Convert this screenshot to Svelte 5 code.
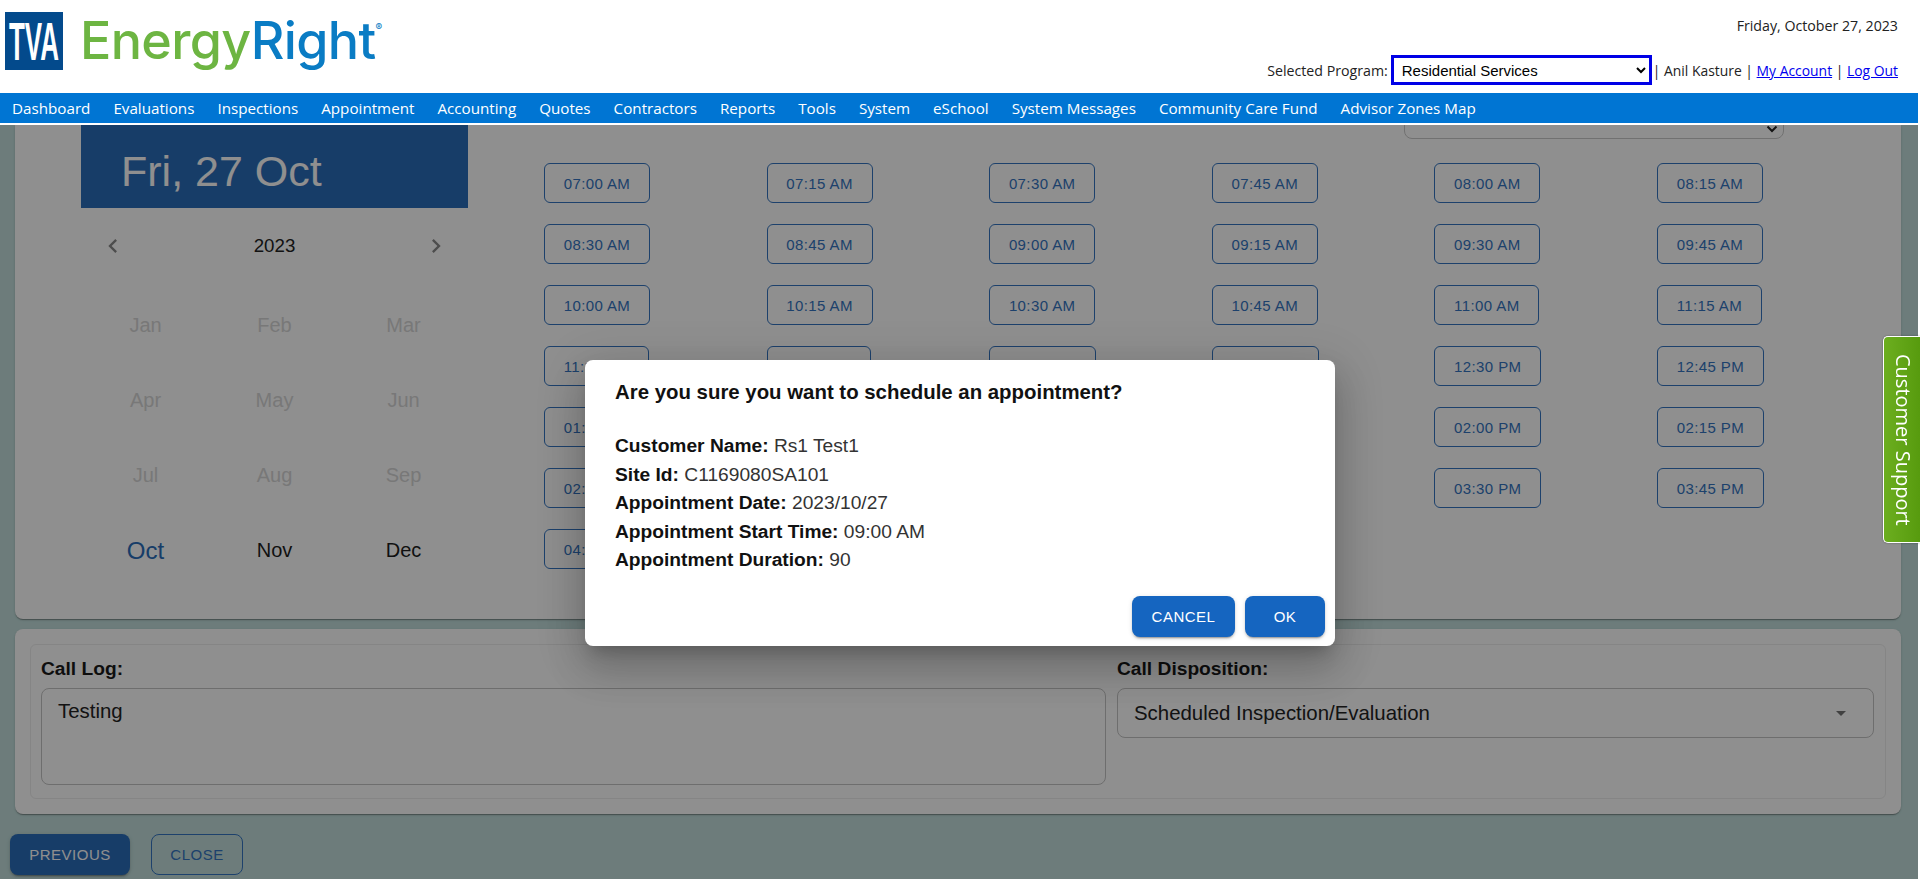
<script>
	const navItems = ['Dashboard', 'Evaluations', 'Inspections', 'Appointment', 'Accounting', 'Quotes', 'Contractors', 'Reports', 'Tools', 'System', 'eSchool', 'System Messages', 'Community Care Fund', 'Advisor Zones Map'];
	const months = ['Jan', 'Feb', 'Mar', 'Apr', 'May', 'Jun', 'Jul', 'Aug', 'Sep', 'Oct', 'Nov', 'Dec'];
	const slots = [
		'07:00 AM', '07:15 AM', '07:30 AM', '07:45 AM', '08:00 AM', '08:15 AM',
		'08:30 AM', '08:45 AM', '09:00 AM', '09:15 AM', '09:30 AM', '09:45 AM',
		'10:00 AM', '10:15 AM', '10:30 AM', '10:45 AM', '11:00 AM', '11:15 AM',
		'11:30 AM', '11:45 AM', '12:00 PM', '12:15 PM', '12:30 PM', '12:45 PM',
		'01:00 PM', '01:15 PM', '01:30 PM', '01:45 PM', '02:00 PM', '02:15 PM',
		'02:30 PM', '02:45 PM', '03:00 PM', '03:15 PM', '03:30 PM', '03:45 PM',
		'04:00 PM', '04:15 PM', '04:30 PM', '04:45 PM'
	];
	const details = [
		['Customer Name:', 'Rs1 Test1'],
		['Site Id:', 'C1169080SA101'],
		['Appointment Date:', '2023/10/27'],
		['Appointment Start Time:', '09:00 AM'],
		['Appointment Duration:', '90']
	];

	function monthClass(index) {
		if (index === 9) return 'month current';
		if (index > 9) return 'month';
		return 'month disabled';
	}
</script>

<header class="top">
	<div class="logo">
		<svg class="tva" width="58" height="58" viewBox="0 0 58 58">
			<rect width="58" height="58" fill="#034a8c" />
			<text x="29" y="48" text-anchor="middle" textLength="50" lengthAdjust="spacingAndGlyphs">TVA</text>
		</svg>
		<div class="brand"><span class="energy">Energy</span><span class="right">Right</span><sup>®</sup></div>
	</div>
	<div class="user">
		<div class="today">Friday, October 27, 2023</div>
		<div class="program">
			<span class="program-label">Selected Program:</span>
			<select class="program-select">
				<option>Residential Services</option>
			</select>
			<span class="account">| Anil Kasture | <a href="#account">My Account</a> | <a href="#logout">Log Out</a></span>
		</div>
	</div>
</header>

<nav class="menu">
	{#each navItems as item}
		<span>{item}</span>
	{/each}
</nav>

<main class="content">
	<section class="card schedule">
		<div class="calendar">
			<div class="date-head">Fri, 27 Oct</div>
			<div class="year-row">
				<svg width="28" height="28" viewBox="0 0 24 24"><path d="M15.41 7.41 14 6l-6 6 6 6 1.41-1.41L10.83 12z" /></svg>
				<span>2023</span>
				<svg width="28" height="28" viewBox="0 0 24 24"><path d="M10 6 8.59 7.41 13.17 12l-4.58 4.59L10 18l6-6z" /></svg>
			</div>
			<div class="months">
				{#each months as month, i}
					<div class={monthClass(i)}>{month}</div>
				{/each}
			</div>
		</div>
		<div class="times">
			<div class="duration">
				<svg width="12" height="8" viewBox="0 0 12 8"><path d="M1.5 1.5 6 6l4.5-4.5" /></svg>
			</div>
			<div class="slots">
				{#each slots as slot}
					<div class="slot-cell"><button class="slot">{slot}</button></div>
				{/each}
			</div>
		</div>
	</section>

	<section class="card log">
		<div class="log-inner">
			<div class="log-field">
				<div class="field-label">Call Log:</div>
				<div class="log-text">Testing</div>
			</div>
			<div class="disposition-field">
				<div class="field-label">Call Disposition:</div>
				<div class="disposition">
					<span>Scheduled Inspection/Evaluation</span>
					<svg width="24" height="24" viewBox="0 0 24 24"><path d="M7 10l5 5 5-5z" /></svg>
				</div>
			</div>
		</div>
	</section>

	<div class="actions">
		<button class="btn primary">PREVIOUS</button>
		<button class="btn outline">CLOSE</button>
	</div>

	<div class="backdrop">
		<div class="dialog">
			<h2>Are you sure you want to schedule an appointment?</h2>
			<div class="details">
				{#each details as row}
					<div><b>{row[0]}</b> {row[1]}</div>
				{/each}
			</div>
			<div class="dialog-actions">
				<button class="dialog-btn cancel">CANCEL</button>
				<button class="dialog-btn ok">OK</button>
			</div>
		</div>
	</div>
</main>

<div class="support">Customer Support</div>

<style>
	:global(body) {
		background: #fff;
		font-family: "Liberation Sans", Arial, sans-serif;
		overflow: hidden;
	}

	.top {
		width: 1918px;
		height: 93px;
		display: flex;
		justify-content: space-between;
		background: #fff;
	}

	.logo {
		display: flex;
		padding: 12px 0 0 5px;
	}

	.tva {
		overflow: visible;
	}

	.tva text {
		fill: #fff;
		font-family: "Liberation Sans", Arial, sans-serif;
		font-weight: 700;
		font-size: 54px;
	}

	.brand {
		margin-left: 17px;
		font-family: Inter, sans-serif;
		font-size: 52px;
		font-weight: 500;
		line-height: 58px;
		height: 58px;
		white-space: nowrap;
		letter-spacing: -0.65px;
	}

	.energy {
		color: #6db542;
	}

	.right {
		color: #0a7cc4;
	}

	.brand sup {
		font-size: 10px;
		color: #0a7cc4;
		vertical-align: 28px;
		line-height: 0;
	}

	.user {
		font-family: "Open Sans", sans-serif;
		font-size: 14.2px;
		color: #222;
		padding-right: 20px;
		text-align: right;
	}

	.today {
		margin-top: 16px;
		height: 39px;
		line-height: 20px;
	}

	.program {
		display: flex;
		align-items: center;
		justify-content: flex-end;
		height: 30px;
		white-space: nowrap;
	}

	.program-label {
		margin-right: 3px;
	}

	.account {
		margin-left: 1px;
		font-size: 13.9px;
	}

	.program a {
		color: #0000ee;
	}

	.program-select {
		width: 261px;
		height: 30px;
		flex-shrink: 0;
		border: 3px solid #0000e6;
		background: #fff;
		color: #000;
		font-family: "Liberation Sans", Arial, sans-serif;
		font-size: 15px;
		padding-left: 4px;
		outline: none;
	}

	.menu {
		width: 1918px;
		height: 30px;
		background: #0075d3;
		display: flex;
		align-items: center;
		gap: 23px;
		padding-left: 12px;
		box-sizing: border-box;
		color: #fff;
		font-family: "Open Sans", sans-serif;
		font-size: 15.2px;
		margin-bottom: 2px;
	}

	.content {
		position: relative;
		width: 1918px;
		height: 754px;
		overflow: hidden;
		background: #c2dedc;
		padding: 0 17px 0 15px;
		box-sizing: border-box;
	}

	.card {
		background: #fff;
		border-radius: 8px;
		box-shadow: 0 2px 1px -1px rgba(0, 0, 0, 0.2), 0 1px 1px rgba(0, 0, 0, 0.14), 0 1px 3px rgba(0, 0, 0, 0.12);
	}

	.schedule {
		height: 494px;
		display: flex;
		border-radius: 0 0 8px 8px;
		overflow: hidden;
		margin-bottom: 10px;
	}

	.calendar {
		width: 387px;
		margin-left: 66px;
		flex-shrink: 0;
	}

	.date-head {
		height: 83px;
		background: #2a6dba;
		color: #fff;
		font-size: 43px;
		line-height: 93px;
		padding-left: 40px;
		box-sizing: border-box;
	}

	.year-row {
		height: 75px;
		margin-bottom: 5px;
		display: flex;
		align-items: center;
		justify-content: space-between;
		padding: 0 18px;
		font-size: 18.7px;
		color: #222;
	}

	.year-row svg {
		fill: #8a8a8a;
	}

	.months {
		display: grid;
		grid-template-columns: repeat(3, 1fr);
		grid-auto-rows: 75px;
	}

	.month {
		display: flex;
		align-items: center;
		justify-content: center;
		font-size: 20px;
		color: #1e1e1e;
	}

	.month.disabled {
		color: #d6d6d6;
	}

	.month.current {
		color: #2a6dba;
		font-size: 24px;
	}

	.times {
		margin-left: 76px;
		flex: 1;
	}

	.duration {
		width: 380px;
		height: 40px;
		margin: -26px 0 24px 860px;
		border: 1px solid #c9c9c9;
		border-radius: 8px;
		box-sizing: border-box;
		display: flex;
		align-items: flex-end;
		justify-content: flex-end;
		padding: 0 5px 5px 0;
	}

	.duration path {
		fill: none;
		stroke: #222;
		stroke-width: 2;
	}

	.slots {
		display: grid;
		grid-template-columns: repeat(6, 222.6px);
		grid-auto-rows: 40px;
		row-gap: 21px;
	}

	.slot {
		height: 40px;
		padding: 0 18.7px;
		border: 1px solid #3474c0;
		border-radius: 6px;
		background: transparent;
		color: #3474c0;
		font-family: "Liberation Sans", Arial, sans-serif;
		font-size: 15px;
		letter-spacing: 0.4px;
	}

	.log {
		height: 185px;
		padding: 15px;
		box-sizing: border-box;
	}

	.log-inner {
		height: 155px;
		border: 1px solid #eee;
		border-radius: 6px;
		box-sizing: border-box;
		display: flex;
		gap: 11px;
		padding: 0 11px 0 10px;
	}

	.field-label {
		height: 43px;
		line-height: 48px;
		font-size: 19.2px;
		font-weight: 700;
		color: #1a1a1a;
	}

	.log-field {
		width: 1065px;
		flex-shrink: 0;
	}

	.disposition-field {
		flex: 1;
	}

	.log-text {
		height: 97px;
		border: 1px solid #c4c4c4;
		border-radius: 8px;
		box-sizing: border-box;
		padding: 11px 16px;
		font-size: 20.4px;
		color: #222;
	}

	.disposition {
		height: 50px;
		border: 1px solid #c4c4c4;
		border-radius: 8px;
		box-sizing: border-box;
		padding: 0 20px 0 16px;
		display: flex;
		align-items: center;
		justify-content: space-between;
		font-size: 20.4px;
		color: #222;
	}

	.disposition svg {
		fill: #757575;
	}

	.actions {
		display: flex;
		gap: 21px;
		margin: 20px 0 0 -5px;
	}

	.btn {
		height: 41px;
		border-radius: 8px;
		font-family: "Liberation Sans", Arial, sans-serif;
		font-size: 15px;
		letter-spacing: 0.5px;
	}

	.primary {
		width: 120px;
		background: #2a6dba;
		border: none;
		color: #fff;
		box-shadow: 0 3px 1px -2px rgba(0, 0, 0, 0.2), 0 2px 2px rgba(0, 0, 0, 0.14), 0 1px 5px rgba(0, 0, 0, 0.12);
	}

	.outline {
		width: 92px;
		background: transparent;
		border: 1px solid #3474c0;
		color: #3474c0;
	}

	.backdrop {
		position: absolute;
		inset: 0;
		background: rgba(0, 0, 0, 0.44);
		display: flex;
		align-items: center;
		justify-content: center;
	}

	.dialog {
		width: 750px;
		height: 286px;
		margin: 2px 0 0 2px;
		background: #fff;
		border-radius: 8px;
		box-sizing: border-box;
		padding: 17px 10px 10px 30px;
		box-shadow: 0 11px 15px -7px rgba(0, 0, 0, 0.2), 0 24px 38px 3px rgba(0, 0, 0, 0.14), 0 9px 46px 8px rgba(0, 0, 0, 0.12);
		color: #333;
	}

	h2 {
		margin: 0 0 25px;
		font-size: 20.4px;
		line-height: 30px;
		font-weight: 700;
		color: #111;
	}

	.details {
		font-size: 19.2px;
		line-height: 28.5px;
		height: 164px;
	}

	.details b {
		color: #111;
	}

	.dialog-actions {
		display: flex;
		justify-content: flex-end;
		gap: 10px;
	}

	.dialog-btn {
		height: 41px;
		border: none;
		border-radius: 8px;
		background: #1565c0;
		color: #fff;
		font-family: "Liberation Sans", Arial, sans-serif;
		font-size: 15px;
		letter-spacing: 0.5px;
		box-shadow: 0 3px 1px -2px rgba(0, 0, 0, 0.2), 0 2px 2px rgba(0, 0, 0, 0.14), 0 1px 5px rgba(0, 0, 0, 0.12);
	}

	.cancel {
		width: 103px;
	}

	.ok {
		width: 80px;
	}

	.support {
		position: fixed;
		top: 336px;
		right: 0;
		width: 37px;
		height: 207px;
		box-sizing: border-box;
		writing-mode: vertical-rl;
		text-align: center;
		line-height: 33px;
		background: linear-gradient(to right, #6cae1f, #579b0e);
		border: 1px solid #fff;
		border-right: none;
		border-radius: 5px 0 0 5px;
		color: #fff;
		font-family: "Open Sans", sans-serif;
		font-size: 20px;
		box-shadow: 0 0 2px rgba(0, 0, 0, 0.4);
	}
</style>
